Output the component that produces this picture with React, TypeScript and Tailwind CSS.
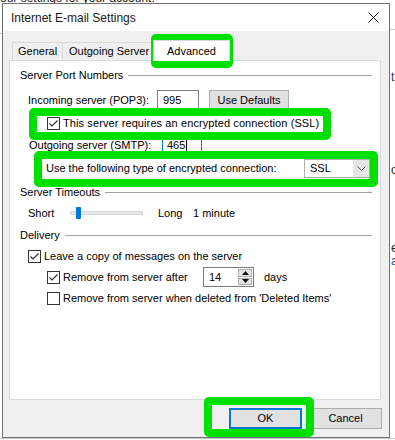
import React from "react";

const green = "pointer-events-none absolute rounded-[5px] border-[8px] border-[#00e000]";

function Check({ checked }: { checked: boolean }) {
  return (
    <span className="flex h-[13px] w-[13px] shrink-0 items-center justify-center border border-[#333333] bg-white">
      {checked && (
        <svg width="11" height="11" viewBox="0 0 11 11">
          <path d="M1.5 5.5 L4 8 L9.5 2.5" fill="none" stroke="#333333" strokeWidth="1.2" />
        </svg>
      )}
    </span>
  );
}

function Group({ label }: { label: string }) {
  return (
    <div className="flex h-[14px] items-center gap-[5px]">
      <span>{label}</span>
      <span className="h-px flex-1 bg-[#a0a0a0]" />
    </div>
  );
}

export default function App() {
  return (
    <div className="relative h-[440px] w-[395px] overflow-hidden bg-white font-['Liberation_Sans',Arial,sans-serif] text-[11px] text-black">
      {/* window behind the dialog */}
      <div className="absolute left-[-6px] top-[-11px] text-[12px] text-[#222]">your settings for your account.</div>
      <div className="absolute left-0 top-[33px] h-px w-[2px] bg-[#c8c8c8]" />
      <div className="absolute left-[390px] top-[29px] h-px w-[5px] bg-[#c8c8c8]" />
      <div className="absolute left-[391px] top-[68px] text-[12px] text-[#3a2a6a]">t</div>
      <div className="absolute left-[391px] top-[161px] text-[12px] text-[#222]">o</div>
      <div className="absolute left-[391px] top-[239px] text-[12px] text-[#222]">e</div>
      <div className="absolute left-[391px] top-[252px] text-[12px] text-[#1a4a8a]">a</div>
      <div className="absolute left-0 top-[438px] h-px w-[395px] bg-[#c8c8c8]" />

      {/* dialog */}
      <div className="absolute left-[2px] top-[3px] flex h-[435px] w-[388px] flex-col border border-[#6f6f6f] bg-[#f0f0f0]">
        <div className="flex h-[27px] shrink-0 items-center justify-between bg-white pl-[8px] pr-[10px]">
          <span className="text-[12px] text-[#1a1a1a]">Internet E-mail Settings</span>
          <svg width="11" height="11" viewBox="0 0 11 11">
            <path d="M0.5 0.5 L10.5 10.5 M10.5 0.5 L0.5 10.5" stroke="#111" strokeWidth="1" />
          </svg>
        </div>

        {/* tabs */}
        <div className="mt-[11px] flex h-[18px] items-end pl-[9px]">
          <div className="flex h-[18px] w-[51px] items-center border border-b-0 border-[#d9d9d9] bg-[#f0f0f0] pl-[5px]">General</div>
          <div className="flex h-[18px] w-[90px] items-center overflow-hidden whitespace-nowrap border border-b-0 border-l-0 border-[#d9d9d9] bg-[#f0f0f0] pl-[6px]">Outgoing Server</div>
          <div className="relative z-10 -mb-px flex h-[21px] w-[77px] items-center border border-b-0 border-[#d9d9d9] bg-white pl-[13px]">Advanced</div>
        </div>

        {/* panel */}
        <div className="ml-[6px] flex h-[340px] w-[372px] flex-col border border-[#d9d9d9] bg-white pl-[10px] pr-[8px]">
          <div className="mt-[7px]">
            <Group label="Server Port Numbers" />
          </div>

          <div className="mt-[8px] flex h-[21px] items-center pl-[8px]">
            <span className="w-[129px]">Incoming server (POP3):</span>
            <div className="flex h-[21px] w-[42px] items-center border border-[#7a7a7a] pl-[5px]">995</div>
            <div className="ml-[10px] flex h-[21px] w-[80px] items-center justify-center border border-[#adadad] bg-[#e1e1e1]">Use Defaults</div>
          </div>

          <div className="mt-[5px] flex h-[14px] items-center gap-[3px] pl-[27px]">
            <Check checked />
            <span className="tracking-[0.1px]">This server requires an encrypted connection (SSL)</span>
          </div>

          <div className="mt-[5px] flex h-[20px] items-center pl-[9px]">
            <span className="w-[133px]">Outgoing server (SMTP):</span>
            <div className="flex h-[20px] w-[40px] items-center border border-[#0078d7] pl-[4px]">
              465<span className="ml-px h-[12px] w-px bg-black" />
            </div>
          </div>

          <div className="mt-[4px] flex h-[19px] items-center pl-[26px] pr-[2px]">
            <span>Use the following type of encrypted connection:</span>
            <div className="ml-auto flex h-[19px] w-[66px] items-center border border-[#adadad] bg-white">
              <span className="flex-1 pl-[5px]">SSL</span>
              <span className="flex h-full w-[16px] items-center justify-center bg-[#e5e5e5]">
                <svg width="9" height="5" viewBox="0 0 9 5">
                  <path d="M0.5 0.5 L4.5 4.5 L8.5 0.5" fill="none" stroke="#555" strokeWidth="1" />
                </svg>
              </span>
            </div>
          </div>

          <div className="mt-[7px]">
            <Group label="Server Timeouts" />
          </div>

          <div className="mt-[7px] flex h-[14px] items-center pl-[8px]">
            <span className="w-[42px]">Short</span>
            <div className="relative h-[4px] w-[73px] border border-[#d6d6d6] bg-[#e7eaea]">
              <span className="absolute left-[5px] top-[-5px] h-[12px] w-[5px] rounded-[1px] bg-[#0078d7]" />
            </div>
            <span className="ml-[15px] w-[35px]">Long</span>
            <span>1 minute</span>
          </div>

          <div className="mt-[8px]">
            <Group label="Delivery" />
          </div>

          <div className="mt-[7px] flex h-[14px] items-center gap-[3px] pl-[8px]">
            <Check checked />
            <span>Leave a copy of messages on the server</span>
          </div>

          <div className="mt-[4px] flex h-[20px] items-center pl-[27px]">
            <Check checked />
            <span className="ml-[3px] w-[140px]">Remove from server after</span>
            <div className="flex h-[20px] w-[51px] items-center border border-[#7a7a7a]">
              <span className="flex-1 pl-[5px]">14</span>
              <div className="mr-px flex h-[16px] w-[14px] flex-col gap-px">
                <span className="flex flex-1 items-center justify-center border border-[#adadad] bg-[#e5e5e5]">
                  <svg width="7" height="4" viewBox="0 0 7 4"><path d="M0 4 L3.5 0 L7 4 Z" fill="#111" /></svg>
                </span>
                <span className="flex flex-1 items-center justify-center border border-[#adadad] bg-[#e5e5e5]">
                  <svg width="7" height="4" viewBox="0 0 7 4"><path d="M0 0 L3.5 4 L7 0 Z" fill="#111" /></svg>
                </span>
              </div>
            </div>
            <span className="ml-[10px]">days</span>
          </div>

          <div className="mt-[4px] flex h-[14px] items-center gap-[3px] pl-[27px]">
            <Check checked={false} />
            <span>Remove from server when deleted from 'Deleted Items'</span>
          </div>
        </div>

        {/* buttons */}
        <div className="mt-[8px] flex justify-end gap-[7px] pr-[7px]">
          <div className="flex h-[21px] w-[73px] items-center justify-center border-2 border-[#0078d7] bg-[#e1e1e1]">OK</div>
          <div className="flex h-[21px] w-[73px] items-center justify-center border border-[#adadad] bg-[#e1e1e1]">Cancel</div>
        </div>
      </div>

      {/* green highlight annotations */}
      <div className={`${green} left-[151px] top-[34px] h-[34px] w-[82px]`} />
      <div className={`${green} left-[29px] top-[108px] h-[32px] w-[302px]`} />
      <div className={`${green} left-[34px] top-[151px] h-[36px] w-[344px]`} />
      <div className={`${green} left-[204px] top-[397px] h-[40px] w-[110px]`} />
    </div>
  );
}
